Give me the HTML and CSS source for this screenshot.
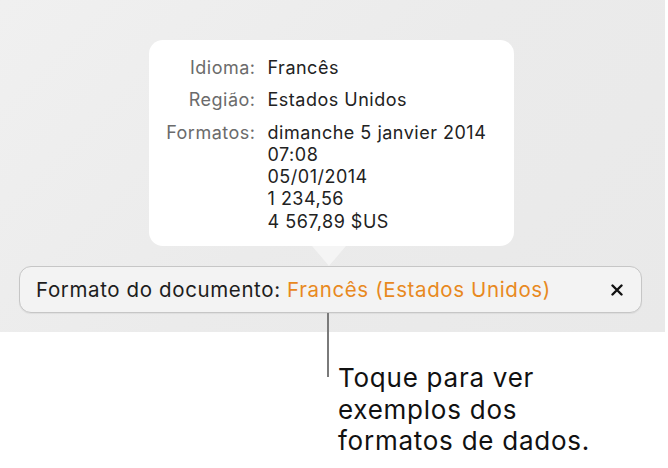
FILE: index.html
```html
<!DOCTYPE html>
<html lang="pt">
<head>
<meta charset="utf-8">
<title>Formato do documento</title>
<link rel="stylesheet" href="styles.css">
</head>
<body>
<div class="stage">
  <div class="panel">
    <div class="popover">
      <span class="label">Idioma:</span><span class="value">Francês</span>
      <span class="label">Região:</span><span class="value">Estados Unidos</span>
      <span class="label">Formatos:</span>
      <div class="value lines">
        <span>dimanche 5 janvier 2014</span>
        <span>07:08</span>
        <span>05/01/2014</span>
        <span>1 234,56</span>
        <span>4 567,89 $US</span>
      </div>
    </div>
    <div class="pointer"></div>
    <div class="bar">
      <span class="bar-text">Formato do documento: <span class="accent">Francês (Estados Unidos)</span></span>
      <svg class="close" width="12" height="12" viewBox="0 0 12 12"><path d="M1.5 1.5 L10.5 10.5 M10.5 1.5 L1.5 10.5" stroke="#111" stroke-width="2.4" stroke-linecap="round"/></svg>
    </div>
  </div>
  <div class="callout">
    <div class="leader"></div>
    <p class="note">Toque para ver<br>exemplos dos<br>formatos de dados.</p>
  </div>
</div>
</body>
</html>
```

FILE: styles.css
```css
html, body {
  margin: 0;
  padding: 0;
  background: #ffffff;
}
body {
  font-family: Inter, "Noto Sans", "Liberation Sans", sans-serif;
  color: #1d1d1d;
}
.stage {
  width: 668px;
  height: 468px;
  display: flex;
  flex-direction: column;
}
.panel {
  width: 665px;
  height: 332px;
  box-sizing: border-box;
  padding: 40px 23px 0 19px;
  background: linear-gradient(135deg, #f0f0f0 0%, #ebebeb 50%, #e9e9e9 100%);
  display: flex;
  flex-direction: column;
  align-items: center;
}
.popover {
  width: 365px;
  height: 206px;
  box-sizing: border-box;
  margin-left: 1px;
  background: #ffffff;
  border-radius: 14px;
  padding: 17px 0 0 0;
  display: grid;
  grid-template-columns: 107px auto;
  column-gap: 12px;
  row-gap: 10px;
  align-content: start;
  font-size: 18px;
  line-height: 22.25px;
  letter-spacing: 0.5px;
}
.label {
  text-align: right;
  color: #6b6b6b;
}
.value {
  color: #222222;
}
.lines {
  display: flex;
  flex-direction: column;
}
.pointer {
  width: 0;
  height: 0;
  margin-left: -4px;
  border-left: 17px solid transparent;
  border-right: 17px solid transparent;
  border-top: 20px solid #f5f5f5;
}
.bar {
  align-self: stretch;
  height: 47px;
  box-sizing: border-box;
  border: 1.5px solid #c6c6c6;
  border-radius: 12px;
  background: #f3f3f3;
  box-shadow: 0 1px 1px rgba(0,0,0,0.06);
  display: flex;
  align-items: center;
  justify-content: space-between;
  padding: 0 18px 0 16px;
  font-size: 20.5px;
  letter-spacing: 0.62px;
}
.bar-text {
  color: #1d1d1d;
}
.accent {
  color: #e8891e;
}
.close {
  display: block;
}
.callout {
  display: flex;
  align-items: flex-start;
  padding-left: 327px;
}
.leader {
  width: 2px;
  height: 64px;
  margin-top: -19px;
  background: #7a7a7a;
}
.note {
  margin: 30px 0 0 9px;
  font-size: 26px;
  line-height: 31.5px;
  letter-spacing: 0.75px;
  color: #111111;
}
```
